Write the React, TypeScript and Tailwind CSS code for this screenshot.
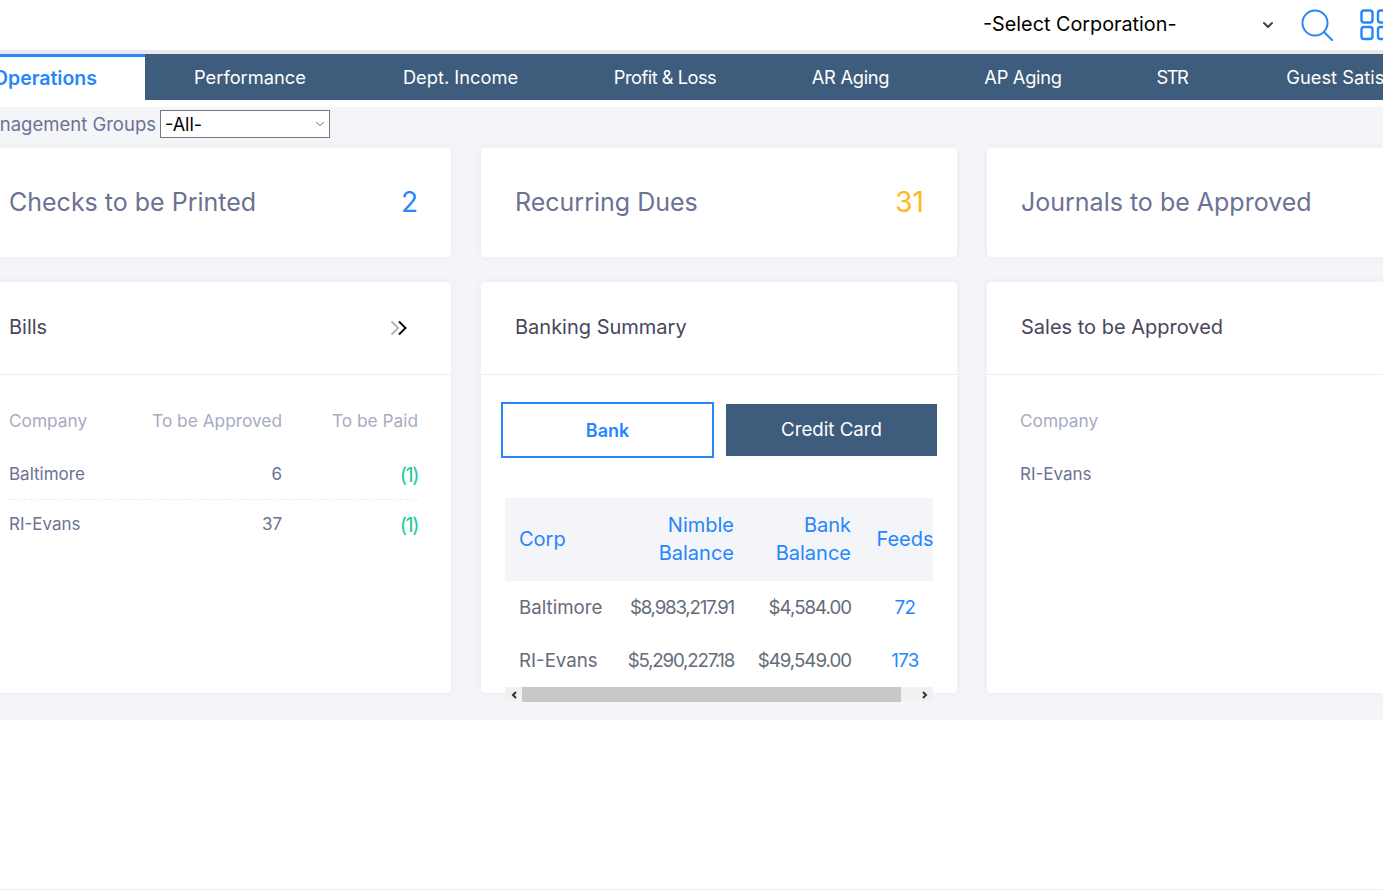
import { ChevronDown } from 'lucide-react';

const tabs = [
  { label: 'Performance', width: 'w-[210px]', tracking: '' },
  { label: 'Dept. Income', width: 'w-[211px]', tracking: '' },
  { label: 'Profit & Loss', width: 'w-[198px]', tracking: 'tracking-[-0.5px]' },
  { label: 'AR Aging', width: 'w-[173px]', tracking: 'tracking-[-0.3px]' },
  { label: 'AP Aging', width: 'w-[172px]', tracking: 'tracking-[-0.3px]' },
  { label: 'STR', width: 'w-[126px]', tracking: 'tracking-[-1.5px]' },
  { label: 'Guest Satisfaction', width: 'w-[260px]', tracking: '' },
];

const bills = [
  { company: 'Baltimore', approved: '6', paid: '(1)' },
  { company: 'RI-Evans', approved: '37', paid: '(1)' },
];

const banks = [
  { corp: 'Baltimore', nimble: '$8,983,217.91', bank: '$4,584.00', feeds: '72' },
  { corp: 'RI-Evans', nimble: '$5,290,227.18', bank: '$49,549.00', feeds: '173' },
];

function StatCard({ title, value, color }: { title: string; value?: string; color?: string }) {
  return (
    <div className="flex h-[109px] w-[476px] shrink-0 items-center justify-between rounded bg-white pl-[34px] pr-[33px] shadow-[0_0_8px_rgba(82,63,105,0.05)]">
      <span className="text-[25px] text-[#6c7293]">{title}</span>
      <span className={`pb-[2px] text-[28px] ${color}`}>{value}</span>
    </div>
  );
}

function CardHeader({ title, children }: { title: string; children?: React.ReactNode }) {
  return (
    <div className="flex h-[93px] items-center justify-between border-b border-[#ebedf2] pl-[34px] pr-[43px]">
      <span className="pb-[2px] text-[20px] text-[#48465b]">{title}</span>
      {children}
    </div>
  );
}

export default function App() {
  return (
    <div className="h-[892px] w-full overflow-hidden bg-white font-['Inter',sans-serif]">
      <div className="-ml-[55px] w-[1540px]">
        <header className="flex h-[54px] items-center border-b-4 border-[#e9e9e9] pl-[1038px]">
          <span className="w-[277px] text-[19.8px] text-black">-Select Corporation-</span>
          <ChevronDown className="h-4 w-4 text-[#444]" strokeWidth={3} />
          <svg className="ml-[25px] h-[32px] w-[32px] text-[#2786fb]" viewBox="0 0 32 32" fill="none" stroke="currentColor" strokeWidth="2">
            <circle cx="14" cy="14" r="12.5" />
            <path d="M23 23l8 8" strokeLinecap="round" />
          </svg>
          <svg className="ml-[27px] h-[32px] w-[32px] text-[#2786fb]" viewBox="0 0 32 32" fill="none" stroke="currentColor" strokeWidth="2.4">
            <rect x="1.5" y="1.5" width="11" height="12" rx="2.5" />
            <rect x="18" y="1.5" width="11" height="12" rx="2.5" />
            <rect x="1.5" y="18" width="11" height="12" rx="2.5" />
            <rect x="18" y="18" width="11" height="12" rx="2.5" />
          </svg>
        </header>

        <nav className="flex h-[46px] items-center bg-[#3e5c7b]">
          <div className="flex h-full w-[200px] shrink-0 items-center border-t-[3px] border-[#2786fb] bg-white pl-[48px] text-[19.5px] font-semibold text-[#2786fb]">
            Operations
          </div>
          {tabs.map(tab => (
            <div key={tab.label} className={`shrink-0 whitespace-nowrap pt-[2px] text-center text-[18.3px] text-white ${tab.width} ${tab.tracking}`}>
              {tab.label}
            </div>
          ))}
        </nav>

        <main className="mt-[7px] h-[613px] bg-[#f3f5f9]">
          <div className="flex h-[41px] items-start pt-[3px]">
            <span className="w-[215px] whitespace-nowrap pr-[4px] pt-[1px] text-right text-[18.5px] text-[#6c7293]">Management Groups</span>
            <div className="flex h-[28px] w-[170px] items-center justify-between border border-[#767676] bg-white pl-[4px] pr-[2px] text-[18px] text-black">
              <span>-All-</span>
              <ChevronDown className="h-[14px] w-[14px] text-[#555]" strokeWidth={1.5} />
            </div>
          </div>

          <div className="flex gap-[30px] pl-[30px]">
            <StatCard title="Checks to be Printed" value="2" color="text-[#2786fb]" />
            <StatCard title="Recurring Dues" value="31" color="text-[#ffb822]" />
            <StatCard title="Journals to be Approved" />
          </div>

          <div className="mt-[25px] flex gap-[30px] pl-[30px]">
            <section className="h-[411px] w-[476px] shrink-0 rounded bg-white shadow-[0_0_8px_rgba(82,63,105,0.05)]">
              <CardHeader title="Bills">
                <svg className="h-[16px] w-[18px]" viewBox="0 0 18 16" fill="none" strokeWidth="2">
                  <path d="M1.5 1.5L8 8l-6.5 6.5" stroke="#b5b5b5" />
                  <path d="M9 1.5L15.5 8 9 14.5" stroke="#111" />
                </svg>
              </CardHeader>
              <div className="pl-[34px] pr-[33px] pt-[27px]">
                <div className="flex h-[38px] items-center text-[17.3px] text-[#a7abc3]">
                  <span className="flex-1">Company</span>
                  <span className="w-[160px] text-right">To be Approved</span>
                  <span className="w-[136px] text-right">To be Paid</span>
                </div>
                {bills.map((row, i) => (
                  <div key={row.company} className={`flex h-[50px] items-center text-[17px] text-[#6c7293] ${i === 0 ? 'mt-[10px] border-b border-dashed border-[#ebedf2]' : ''}`}>
                    <span className="flex-1">{row.company}</span>
                    <span className="w-[160px] text-right">{row.approved}</span>
                    <span className="w-[136px] text-right text-[20px] tracking-[-1.5px] text-[#1dc9a0]">{row.paid}</span>
                  </div>
                ))}
              </div>
            </section>

            <section className="h-[411px] w-[476px] shrink-0 rounded bg-white shadow-[0_0_8px_rgba(82,63,105,0.05)]">
              <CardHeader title="Banking Summary" />
              <div className="flex items-center gap-[12px] pl-[20px] pt-[27px]">
                <button className="h-[56px] w-[213px] border-2 border-[#2786fb] text-[18px] font-semibold text-[#2786fb]">Bank</button>
                <button className="h-[52px] w-[211px] bg-[#3e5c7b] pt-[1px] text-[18.7px] text-white">Credit Card</button>
              </div>
              <div className="ml-[24px] mt-[40px] w-[428px]">
                <div className="h-[189px] overflow-hidden">
                  <table className="w-[440px] table-fixed border-collapse text-[18.7px]">
                    <colgroup>
                      <col className="w-[114px]" />
                      <col className="w-[129px]" />
                      <col className="w-[117px]" />
                      <col className="w-[80px]" />
                    </colgroup>
                    <thead>
                      <tr className="h-[83px] bg-[#f3f5f9] text-[20px] leading-[28px] text-[#2786fb]">
                        <th className="pb-[2px] pl-[14px] text-left font-normal">Corp</th>
                        <th className="pb-[2px] pr-[14px] text-right font-normal">Nimble Balance</th>
                        <th className="pb-[2px] pr-[14px] text-right font-normal">Bank Balance</th>
                        <th className="pb-[2px] text-center font-normal">Feeds</th>
                      </tr>
                    </thead>
                    <tbody className="text-[#646c7a]">
                      {banks.map(row => (
                        <tr key={row.corp} className="h-[53px]">
                          <td className="pl-[14px] pt-[2px]">{row.corp}</td>
                          <td className="whitespace-nowrap pr-[14px] pt-[2px] text-right tracking-[-1.2px]">{row.nimble}</td>
                          <td className="whitespace-nowrap pr-[14px] pt-[2px] text-right tracking-[-1px]">{row.bank}</td>
                          <td className="pt-[2px] text-center tracking-[-0.6px] text-[#2786fb]">{row.feeds}</td>
                        </tr>
                      ))}
                    </tbody>
                  </table>
                </div>
                <div className="flex h-[15px] items-center bg-[#f1f1f1]">
                  <span className="flex w-[17px] justify-center">
                    <svg className="h-[8px] w-[6px]" viewBox="0 0 6 8" fill="none" stroke="#333" strokeWidth="2"><path d="M5 1L2 4l3 3" /></svg>
                  </span>
                  <span className="h-full w-[379px] bg-[#c8c8c8]" />
                  <span className="flex flex-1 justify-end pr-[5px]">
                    <svg className="h-[8px] w-[6px]" viewBox="0 0 6 8" fill="none" stroke="#333" strokeWidth="2"><path d="M1 1l3 3-3 3" /></svg>
                  </span>
                </div>
              </div>
            </section>

            <section className="h-[411px] w-[476px] shrink-0 rounded bg-white shadow-[0_0_8px_rgba(82,63,105,0.05)]">
              <CardHeader title="Sales to be Approved" />
              <div className="pl-[33px] pt-[27px]">
                <div className="flex h-[38px] items-center text-[17.3px] text-[#a7abc3]">Company</div>
                <div className="mt-[10px] flex h-[50px] items-center text-[17px] text-[#6c7293]">RI-Evans</div>
              </div>
            </section>
          </div>
        </main>

        <div className="mt-[169px] border-t border-[#ebedf2]" />
      </div>
    </div>
  );
}
